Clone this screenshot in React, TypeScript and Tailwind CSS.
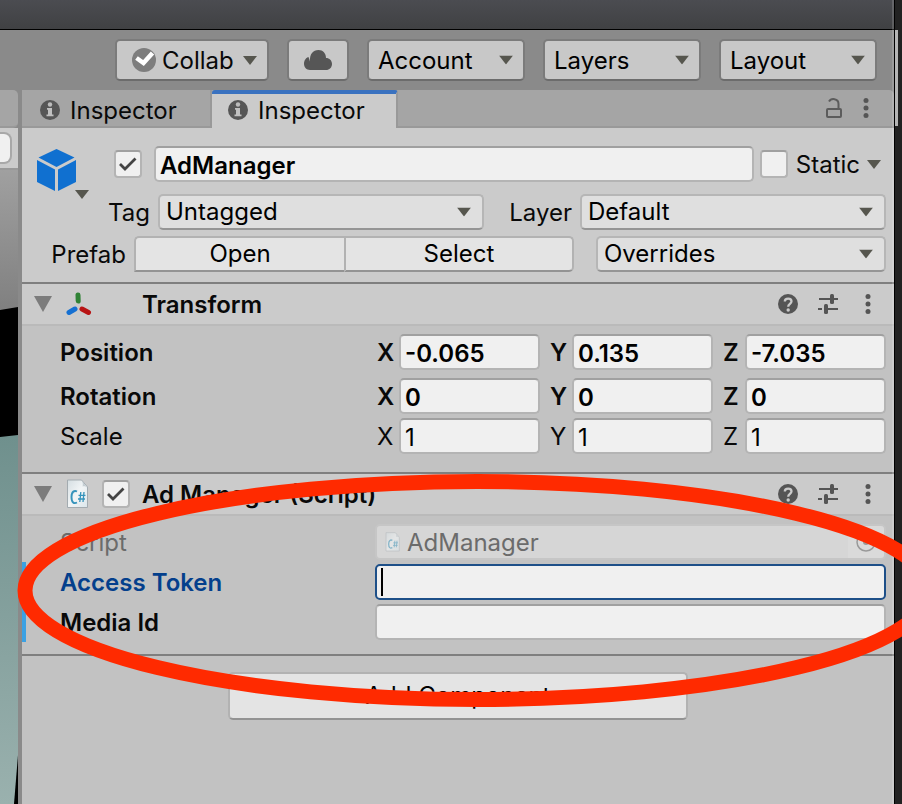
import type { ReactNode } from "react";
import { clsx } from "clsx";

const field =
  "h-9 min-w-0 rounded-[5px] border-2 border-[#b4b4b4] border-t-[#a0a0a0] bg-[#f0f0f0] px-1 pt-0.5 text-black outline-none";
const action =
  "border-2 border-[#b2b2b2] border-b-[#939393] bg-[#e4e4e4] text-center text-black";
const text = "pt-0.5";

function Arrow({ className }: { className?: string }) {
  return (
    <svg className={clsx("h-[9px] w-[14px] shrink-0", className)} viewBox="0 0 14 9" aria-hidden="true">
      <path d="M0 0h14L7 9z" fill="#56564e" />
    </svg>
  );
}

function Dropdown({ label, value, className, toolbar }: { label: string; value: string; className?: string; toolbar?: boolean }) {
  return (
    <div className={clsx("relative min-w-0", className)}>
      <select
        aria-label={label}
        className={clsx(
          "block w-full appearance-none rounded-[5px] border-2 text-black outline-none",
          toolbar
            ? "h-[42px] border-[#7b7b7b] border-b-[#6c6c6c] bg-[#c8c8c8] pl-[9px] pt-0.5"
            : "h-9 border-[#b6b6b6] border-b-[#959595] bg-[#dfdfdf] pl-[6px]",
        )}
      >
        <option>{value}</option>
      </select>
      <Arrow
        className={clsx("pointer-events-none absolute top-1/2 -translate-y-1/2", toolbar ? "right-3" : "right-[13px]")}
      />
    </div>
  );
}

function Tick({ label, checked }: { label: string; checked?: boolean }) {
  return (
    <span className="grid h-7 w-7 shrink-0">
      <input
        type="checkbox"
        aria-label={label}
        defaultChecked={checked}
        className="peer col-start-1 row-start-1 h-7 w-7 appearance-none rounded-[4px] border-2 border-[#b4b4b4] border-t-[#a0a0a0] bg-[#f0f0f0]"
      />
      <svg
        viewBox="0 0 28 28"
        className="pointer-events-none col-start-1 row-start-1 hidden h-7 w-7 peer-checked:block"
        aria-hidden="true"
      >
        <path d="M6 14l5 5L21.500 8.500" fill="none" stroke="#444" strokeWidth="2.8" />
      </svg>
    </span>
  );
}

function Info() {
  return (
    <svg viewBox="0 0 20 20" className="h-5 w-5 shrink-0" aria-hidden="true">
      <circle cx="10" cy="10" r="10" fill="#565656" />
      <circle cx="10" cy="4.5" r="2.2" fill="#bcbcbc" />
      <path d="M7 8h5v6.500h1.500v1.700h-7v-1.700H8V9.700H7z" fill="#c0c0c0" />
    </svg>
  );
}

function Kebab() {
  return (
    <svg viewBox="0 0 20 20" className="h-5 w-5" fill="#555" aria-hidden="true">
      <circle cx="10" cy="2.5" r="2.5" />
      <circle cx="10" cy="10" r="2.5" />
      <circle cx="10" cy="17.5" r="2.5" />
    </svg>
  );
}

function ScriptIcon({ className }: { className?: string }) {
  return (
    <svg viewBox="0 0 24 30" className={clsx("shrink-0", className)} aria-hidden="true">
      <defs>
        <linearGradient id="paper" x1="0" y1="0" x2="1" y2="1">
          <stop offset="0" stopColor="#d5dee2" />
          <stop offset="0.5" stopColor="#f2f5f6" />
          <stop offset="1" stopColor="#dbe6eb" />
        </linearGradient>
      </defs>
      <path d="M1.5 1h14l6 7v20.500h-20z" fill="url(#paper)" stroke="#a3abb0" />
      <path d="M15.500 1c1.500 2 1.500 5 1 6.500 2-.5 3.500-.3 5 1.500z" fill="#c5ced3" />
      <path d="M11 12.500c-2.500-1.300-5.500-.2-5.500 5.500s2.500 7 5.500 5.500" fill="none" stroke="#3593bb" strokeWidth="1.900" />
      <path d="M14.800 13l-1 10M18 13l-1 10M12.500 16.300h7M12 20h7" fill="none" stroke="#3593bb" strokeWidth="1.300" />
    </svg>
  );
}

function ComponentHeader({ title, icon, toggle }: { title: string; icon: ReactNode; toggle?: boolean }) {
  return (
    <header className="flex h-[42px] items-center border-b-2 border-[#bababa] bg-[#cbcbcb] pl-3 pr-4">
      <button aria-label={`Collapse ${title}`} className="shrink-0">
        <svg viewBox="0 0 18 16" className="h-4 w-[18px]" aria-hidden="true">
          <path d="M0 0h18L9 16z" fill="#7c7c7c" />
        </svg>
      </button>
      <span className="ml-3.5 flex w-[26px] shrink-0">{icon}</span>
      <span className="ml-2.5 w-7 shrink-0">{toggle && <Tick label={`Enable ${title}`} checked />}</span>
      <h2 className={clsx(text, "ml-3 flex-1 truncate font-semibold")}>{title}</h2>
      <div className="flex gap-5">
        <button aria-label="Help">
          <svg viewBox="0 0 20 20" className="h-5 w-5" aria-hidden="true">
            <circle cx="10" cy="10" r="10" fill="#555" />
            <path d="M6.800 7.400C6.800 3.600 13.500 3.700 13.500 7.300c0 2.400-3.300 2.600-3.300 5.400" fill="none" stroke="#cbcbcb" strokeWidth="2.300" />
            <circle cx="10.200" cy="16" r="1.700" fill="#cbcbcb" />
          </svg>
        </button>
        <button aria-label="Presets">
          <svg viewBox="0 0 20 20" className="h-5 w-5" fill="#555" aria-hidden="true">
            <path d="M1 4h11v2H1zM16 4h4v2h-4zM0 14h4v2H0zM9 14h11v2H9z" />
            <rect x="12" y="0" width="4" height="10" rx="1.500" />
            <rect x="6" y="10" width="4" height="10" rx="1.500" />
          </svg>
        </button>
        <button aria-label="More">
          <Kebab />
        </button>
      </div>
    </header>
  );
}

function VectorRow({ label, values, strong }: { label: string; values: string[]; strong?: boolean }) {
  return (
    <div className={clsx("flex items-center pl-[38px] pr-2", strong && "font-semibold")}>
      <span className={clsx(text, "w-[317px] shrink-0")}>{label}</span>
      <div className="flex min-w-0 flex-1 gap-2.5">
        {["X", "Y", "Z"].map((axis, i) => (
          <label key={axis} className="flex min-w-0 flex-1 items-center">
            <span className={clsx(text, "w-[22px] shrink-0")}>{axis}</span>
            <input className={clsx(field, "w-full flex-1")} defaultValue={values[i]} />
          </label>
        ))}
      </div>
    </div>
  );
}

function Toolbar() {
  return (
    <div className="flex h-[60px] items-center justify-end gap-[18px] bg-[#8a8a8a] pr-[17px]">
      <button className="flex h-[42px] w-[154px] items-center rounded-[5px] border-2 border-[#7b7b7b] border-b-[#6c6c6c] bg-[#c8c8c8] pl-[15px] pr-2.5">
        <svg viewBox="0 0 24 24" className="h-6 w-6" aria-hidden="true">
          <circle cx="12" cy="12" r="12" fill="#7d7d7d" />
          <path d="M4.500 10l7 5L20.500 5" fill="none" stroke="#fff" strokeWidth="4.500" />
        </svg>
        <span className={clsx(text, "ml-1.5 flex-1 text-left")}>Collab</span>
        <Arrow />
      </button>
      <button aria-label="Services" className="flex h-[42px] w-[62px] items-center justify-center rounded-[5px] border-2 border-[#7b7b7b] border-b-[#6c6c6c] bg-[#c8c8c8]">
        <svg viewBox="0 0 28 20" className="h-5 w-7" aria-hidden="true">
          <path d="M6 20C2.500 20 0 17.200 0 13.800 0 10 2.500 7.500 4.500 7L6 11.500C5.500 4 9 0 14.500 0c4.500 0 7.500 3.500 7.500 8 3.500 0 6 2.600 6 6s-2.500 6-6 6z" fill="#565656" />
        </svg>
      </button>
      <Dropdown toolbar label="Account" value="Account" className="w-[158px]" />
      <Dropdown toolbar label="Layers" value="Layers" className="w-[158px]" />
      <Dropdown toolbar label="Layout" value="Layout" className="w-[158px]" />
    </div>
  );
}

function ScenePanel() {
  return (
    <aside className="flex w-[18px] shrink-0 flex-col overflow-hidden bg-black">
      <div className="bg-[#8a8a8a]">
        <div className="h-[38px] rounded-r-[5px] border-b-2 border-[#999] bg-[#a5a5a5]" />
      </div>
      <div className="h-[42px] border-b-2 border-[#999] bg-[#cbcbcb] pt-1">
        <div className="h-8 w-3 rounded-r-lg border-2 border-l-0 border-[#a8a8a8] bg-[#f0f0f0]" />
      </div>
      <svg viewBox="0 0 18 634" preserveAspectRatio="none" className="min-h-0 w-full flex-1" aria-hidden="true">
        <defs>
          <linearGradient id="sky" x1="0" y1="0" x2="0" y2="1">
            <stop offset="0" stopColor="#a0a0a0" />
            <stop offset="1" stopColor="#808080" />
          </linearGradient>
          <linearGradient id="floor" x1="0" y1="0" x2="0" y2="1">
            <stop offset="0" stopColor="#6f908d" />
            <stop offset="1" stopColor="#9ab1ae" />
          </linearGradient>
        </defs>
        <path d="M0 0h18v137L0 140z" fill="url(#sky)" />
        <path d="M0 267l18-2v320l-4 49H0z" fill="url(#floor)" />
      </svg>
    </aside>
  );
}

function Tabs() {
  return (
    <div className="bg-[#8a8a8a]">
      <div className="flex h-[38px] rounded-tr-[5px] bg-[#a5a5a5]">
        <button className="flex w-[190px] items-center gap-2.5 border-b-2 border-r-2 border-[#999] pl-[18px] pt-1">
          <Info />
          <span className={text}>Inspector</span>
        </button>
        <button className="flex w-[186px] items-center gap-2.5 rounded-t-[3px] border-r-2 border-t-4 border-r-[#999] border-t-[#3a72c0] bg-[#cbcbcb] pb-0.5 pl-4">
          <Info />
          <span className={text}>Inspector</span>
        </button>
        <div className="flex flex-1 items-center justify-end gap-[14px] border-b-2 border-[#999] pr-[18px]">
          <button aria-label="Lock">
            <svg viewBox="0 0 16 20" className="h-5 w-4" fill="none" stroke="#5c5c5c" strokeWidth="2" aria-hidden="true">
              <rect x="1" y="11" width="14" height="8" rx="1" />
              <path d="M3 3.500C5 0 12.500 0 12.500 6v5" />
            </svg>
          </button>
          <button aria-label="Tab menu">
            <Kebab />
          </button>
        </div>
      </div>
    </div>
  );
}

function ObjectHeader() {
  return (
    <section className="bg-[#cbcbcb] pb-2.5 pt-[18px]">
      <div className="flex h-9 items-center pr-[13px]">
        <button aria-label="Object icon" className="ml-[15px] mr-6 w-[53px] shrink-0 self-start pt-[3px]">
          <svg viewBox="0 0 53 50" className="h-[50px] w-[53px]" aria-hidden="true">
            <path d="M19.500 0l18 8.500-18 9.500-18-9.500z" fill="#1070d0" />
            <path d="M0 11l18 9.500V42L0 33zM39 11l-18 9.500V42l18-9z" fill="#1070d0" />
            <path d="M38 41h14l-7 9z" fill="#56564e" />
          </svg>
        </button>
        <Tick label="Active" checked />
        <input aria-label="Name" className={clsx(field, "ml-3 mr-1.5 flex-1 font-semibold")} defaultValue="AdManager" />
        <Tick label="Static" />
        <button className="ml-2 flex items-center gap-[7px]">
          <span className={text}>Static</span>
          <Arrow />
        </button>
      </div>
      <div className="mt-3 flex items-center pr-2">
        <span className={clsx(text, "w-[136px] shrink-0 pr-2 text-right")}>Tag</span>
        <Dropdown label="Tag" value="Untagged" className="flex-[326]" />
        <span className={clsx(text, "w-24 shrink-0 pr-2 text-right")}>Layer</span>
        <Dropdown label="Layer" value="Default" className="flex-[306]" />
      </div>
      <div className="mt-1.5 flex items-center pr-2">
        <span className={clsx(text, "w-28 shrink-0 pr-2 text-right")}>Prefab</span>
        <button className={clsx(action, "h-9 flex-[208] rounded-tl-[5px] border-r-0")}>Open</button>
        <button className={clsx(action, "mr-[22px] h-9 flex-[226] rounded-r-[5px]")}>Select</button>
        <Dropdown label="Overrides" value="Overrides" className="flex-[290]" />
      </div>
    </section>
  );
}

function AxesIcon() {
  return (
    <svg viewBox="0 0 26 24" className="h-6 w-[26px]" aria-hidden="true" strokeLinecap="round" strokeWidth="5">
      <path d="M12 3l.2 6" stroke="#2f8235" />
      <path d="M9 17l-6 3.500" stroke="#1570d2" />
      <path d="M16 17l6.500 3.500" stroke="#b81414" />
    </svg>
  );
}

function AdManagerBody() {
  return (
    <div className="pb-3 pt-2">
      <div className="mb-0.5 flex items-center pr-2 text-[#6b6b6b]">
        <span className={clsx(text, "w-[353px] shrink-0 pl-[38px]")}>Script</span>
        <div className="flex h-9 flex-1 items-center rounded-[5px] border-2 border-[#c6c6c6] bg-[#d6d6d6] pl-2">
          <ScriptIcon className="h-[22px] w-4 opacity-50" />
          <span className={clsx(text, "ml-1.5 flex-1")}>AdManager</span>
          <button aria-label="Pick script" className="flex h-8 w-9 items-center justify-center rounded-r bg-[#dadada]">
            <svg viewBox="0 0 20 20" className="h-5 w-5" aria-hidden="true">
              <circle cx="10" cy="10" r="9" fill="none" stroke="#999" strokeWidth="1.500" />
              <circle cx="10" cy="10" r="3" fill="#999" />
            </svg>
          </button>
        </div>
      </div>
      <div className="flex font-semibold">
        <div className="w-1 shrink-0 bg-[#3ba1e3]" />
        <div className="flex min-w-0 flex-1 flex-col gap-1 py-0.5 pr-2">
          <label className="flex items-center">
            <span className={clsx(text, "w-[349px] shrink-0 pl-[34px] text-[#043f8c]")}>Access Token</span>
            <span className="relative flex flex-1">
              <input className="h-9 w-full rounded-[5px] border-2 border-[#1d4f88] bg-[#f0f0f0] px-1 caret-transparent outline-none" />
              <span className="absolute left-1.5 top-1 h-7 w-0.5 bg-black" />
            </span>
          </label>
          <label className="flex items-center">
            <span className={clsx(text, "w-[349px] shrink-0 pl-[34px]")}>Media Id</span>
            <input className={clsx(field, "flex-1")} />
          </label>
        </div>
      </div>
    </div>
  );
}

export default function App() {
  return (
    <div className="relative flex h-screen overflow-hidden bg-[#222] font-['Inter','Noto_Sans',sans-serif] text-[24px] leading-8 text-[#090909]">
      <div className="relative flex min-w-0 flex-1 flex-col">
        <div className="h-[30px] shrink-0 border-b border-black bg-linear-to-b from-[#4b4c51] to-[#404143]" />
        <Toolbar />
        <div className="flex min-h-0 flex-1">
          <ScenePanel />
          <main className="flex min-w-0 flex-1 flex-col border-l-4 border-[#8a8a8a] bg-[#c2c2c2]">
            <Tabs />
            <ObjectHeader />
            <section className="border-y-2 border-[#7f7f7f]">
              <ComponentHeader title="Transform" icon={<AxesIcon />} />
              <div className="pb-[18px] pt-2">
                <VectorRow strong label="Position" values={["-0.065", "0.135", "-7.035"]} />
                <div className="mt-2 flex flex-col gap-1">
                  <VectorRow strong label="Rotation" values={["0", "0", "0"]} />
                  <VectorRow label="Scale" values={["1", "1", "1"]} />
                </div>
              </div>
            </section>
            <section className="border-b-2 border-[#7f7f7f]">
              <ComponentHeader toggle title="Ad Manager (Script)" icon={<ScriptIcon className="h-[30px] w-6" />} />
              <AdManagerBody />
            </section>
            <button className={clsx(action, "mx-auto mt-4 h-12 w-[460px] rounded-[5px]")}>Add Component</button>
          </main>
        </div>
        <div className="pointer-events-none absolute inset-y-0 right-0 w-0.5 bg-white/15" />
      </div>
      <div className="w-2 shrink-0 border-l border-black pt-[30px]">
        <div className="h-24 w-[3px] bg-[#b5b5b5]" />
      </div>
      <svg className="pointer-events-none absolute left-0 top-0 h-[804px] w-[960px] max-w-none" viewBox="0 0 960 804" aria-hidden="true">
        <ellipse cx="477" cy="590.500" rx="452" ry="109" fill="none" stroke="#ff2a00" strokeWidth="15" />
      </svg>
    </div>
  );
}
